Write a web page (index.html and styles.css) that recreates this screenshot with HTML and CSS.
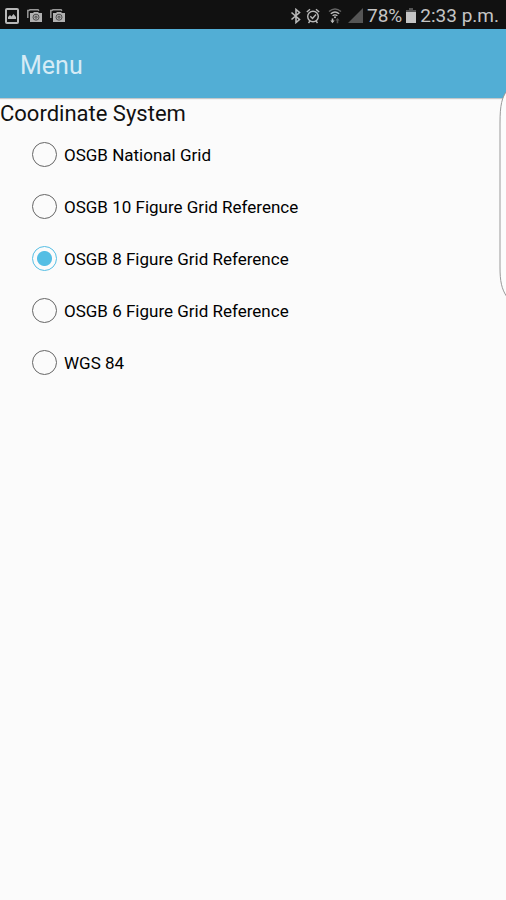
FILE: index.html
```html
<!DOCTYPE html>
<html lang="en">
<head>
<meta charset="utf-8">
<meta name="viewport" content="width=device-width, initial-scale=1">
<title>Menu</title>
<link rel="stylesheet" href="styles.css">
</head>
<body>
<div class="status">
  <div class="status-group notices">
    <svg width="14" height="16" viewBox="0 0 14 16" fill="none" aria-hidden="true">
      <rect x="1" y="1" width="12" height="14" rx="1" stroke="#b8b8b8" stroke-width="2"/>
      <path d="M3 11V9l2-2 1.500 1.500L8.500 6 11 9v2z" fill="#b8b8b8"/>
    </svg>
    <svg width="15" height="13" viewBox="0 0 15 13" fill="none" aria-hidden="true">
      <path d="M.8 9V1.500h1L3 .8h8l1 1" stroke="#989898" stroke-width="1.500"/>
      <path d="M3 4h3l1-1h4l1 1h3v9H3z" fill="#b0b0b0"/>
      <circle cx="9" cy="8.200" r="3" stroke="#333" stroke-width=".8"/>
      <circle cx="9" cy="8.200" r="1.100" stroke="#333" stroke-width=".8"/>
    </svg>
    <svg width="15" height="13" viewBox="0 0 15 13" fill="none" aria-hidden="true">
      <path d="M.8 9V1.500h1L3 .8h8l1 1" stroke="#989898" stroke-width="1.500"/>
      <path d="M3 4h3l1-1h4l1 1h3v9H3z" fill="#b0b0b0"/>
      <circle cx="9" cy="8.200" r="3" stroke="#333" stroke-width=".8"/>
      <circle cx="9" cy="8.200" r="1.100" stroke="#333" stroke-width=".8"/>
    </svg>
  </div>
  <div class="status-group system">
    <svg width="12" height="16" viewBox="0 0 12 16" fill="none" stroke="#b8b8b8" stroke-width="1.600" aria-hidden="true">
      <path d="M1.500 4.500l8 7L6 14.500v-13l3.500 3-8 7"/>
    </svg>
    <svg width="14" height="16" viewBox="0 0 14 16" fill="none" stroke="#b8b8b8" stroke-width="1.400" aria-hidden="true">
      <circle cx="7" cy="8.500" r="5.300"/>
      <path d="M.8 4L4 1.300M13.200 4L10 1.300M2.500 15l1.500-2M11.500 15L10 13M4.300 8.300l2.200 2.200 3.500-4"/>
    </svg>
    <svg class="wifi" width="14" height="16" viewBox="0 0 14 16" fill="none" aria-hidden="true">
      <path d="M1 3.500Q7-1.500 13 3.500" stroke="#666" stroke-width="1.400"/>
      <path d="M2.800 5.700q4.200-3.600 8.400 0M4.600 7.800q2.400-1.800 4.800 0" stroke="#bcbcbc" stroke-width="1.400"/>
      <circle cx="7" cy="9.300" r="1" fill="#bcbcbc"/>
      <path d="M3.700 10.500v2H2.300l2.200 2.800 2.200-2.800H5.300v-2z" fill="#bcbcbc"/>
      <path d="M8.700 15.300v-2.800H7.400l2.100-2.500 2.100 2.500h-1.300v2.800z" fill="#555"/>
    </svg>
    <svg width="15" height="15" viewBox="0 0 15 15" aria-hidden="true"><path d="M15 0v15H0z" fill="#555"/></svg>
    <span>78%</span>
    <svg width="10" height="15" viewBox="0 0 10 15" aria-hidden="true">
      <path d="M3 0h4v2h3v3H0V2h3z" fill="#555"/><path d="M0 4h10v11H0z" fill="#c4c4c4"/>
    </svg>
    <time>2:33 p.m.</time>
  </div>
</div>
<header class="app-bar"><h1>Menu</h1></header>
<main>
  <fieldset class="options">
    <legend>Coordinate System</legend>
    <label class="option"><input type="radio" name="system"><span>OSGB National Grid</span></label>
    <label class="option"><input type="radio" name="system"><span>OSGB 10 Figure Grid Reference</span></label>
    <label class="option"><input type="radio" name="system" checked><span>OSGB 8 Figure Grid Reference</span></label>
    <label class="option"><input type="radio" name="system"><span>OSGB 6 Figure Grid Reference</span></label>
    <label class="option"><input type="radio" name="system"><span>WGS 84</span></label>
  </fieldset>
</main>
<svg class="edge-handle" width="7" height="208" viewBox="0 0 7 208" fill="#fcfcfc" aria-hidden="true">
  <path d="M8 0C3 6 1 14 1 32v144c0 14 1.500 22 7 30" stroke="#999"/>
</svg>
</body>
</html>
```
FILE: styles.css
```css
* {
  box-sizing: border-box;
}

body {
  margin: 0;
  min-height: 100vh;
  background: #fbfbfb;
  color: #111;
  font-family: Roboto, "Liberation Sans", sans-serif;
}

svg {
  display: block;
  flex: none;
}

.status {
  display: flex;
  align-items: center;
  justify-content: space-between;
  height: 29px;
  padding: 2px 7px 0 5px;
  background: #111;
  color: #c4c4c4;
  font-size: 19px;
  line-height: 28px;
  white-space: nowrap;
}

.status-group {
  display: flex;
  align-items: center;
}

.notices {
  gap: 8px;
}

.system {
  gap: 4px;
}

.wifi {
  margin: 0 2px 0 4px;
}

.app-bar {
  display: flex;
  align-items: center;
  height: 69px;
  padding: 4px 20px 0;
  background: #52aed5;
  box-shadow: 0 1px 1px #c4c8ca;
}

h1 {
  margin: 0;
  color: #d6ebf5;
  font-size: 25px;
  font-weight: 400;
  line-height: 32px;
}

.options {
  margin: 0;
  padding: 0;
  border: 0;
}

legend {
  padding: 2px 0 0;
  font-size: 22px;
  line-height: 28px;
}

.option {
  display: flex;
  align-items: center;
  gap: 7px;
  height: 52px;
  padding-left: 32px;
  color: #000;
  font-size: 17px;
  line-height: 24px;
}

.option span {
  padding-top: 2px;
}

input {
  appearance: none;
  flex: none;
  width: 25px;
  height: 25px;
  margin: 0;
  border: 1px solid #666;
  border-radius: 50%;
}

input:checked {
  border-color: #54bee4;
  background: radial-gradient(circle, #54bee4 7px, transparent 8px);
}

.edge-handle {
  position: absolute;
  top: 91px;
  right: 0;
}
```
